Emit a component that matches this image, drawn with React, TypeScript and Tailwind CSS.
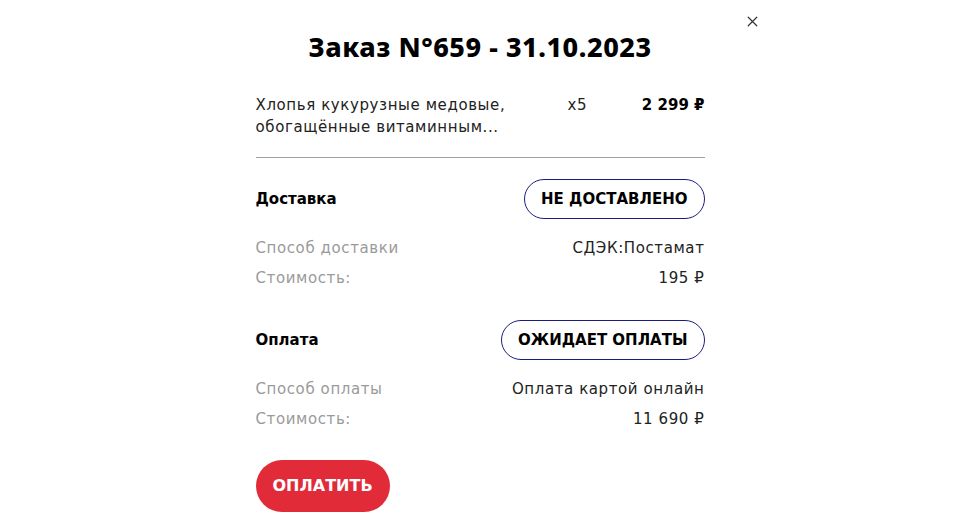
import { X } from "lucide-react";

const InfoRow = ({ label, value }: { label: string; value: string }) => (
  <div className="flex justify-between items-center h-[30px] text-[15px] tracking-[0.04em]">
    <span className="text-[#9a9a9a]">{label}</span>
    <span className="text-[#222]">{value}</span>
  </div>
);

const StatusBlock = ({
  title,
  status,
  rows,
}: {
  title: string;
  status: string;
  rows: { label: string; value: string }[];
}) => (
  <div>
    <div className="flex justify-between items-center">
      <span className="text-[15px] font-bold text-black">{title}</span>
      <div className="h-10 px-4 flex items-center rounded-full border border-[#1c1c80] text-[15px] font-bold uppercase text-black">
        {status}
      </div>
    </div>
    <div className="mt-[14px]">
      {rows.map((r) => (
        <InfoRow key={r.label} label={r.label} value={r.value} />
      ))}
    </div>
  </div>
);

const App = () => {
  return (
    <div
      className="relative w-full h-[524px] bg-white overflow-hidden"
      style={{ fontFamily: '"DejaVu Sans", sans-serif' }}
    >
      <button className="absolute top-[13px] right-[199px] text-[#333]">
        <X size={17} strokeWidth={1.7} />
      </button>

      <div className="mx-auto w-[449px] pt-[28px]">
        <h1
          className="text-center text-[27px] font-extrabold text-black leading-[38px] tracking-[0.02em]"
          style={{ fontFamily: '"Noto Sans", sans-serif' }}
        >
          Заказ N°659 - 31.10.2023
        </h1>

        {/* item */}
        <div className="mt-[28px] flex items-start text-[15px] leading-[22px] tracking-[0.04em]">
          <div className="w-[312px] text-[#222]">
            Хлопья кукурузные медовые,
            <br />
            обогащённые витаминным...
          </div>
          <div className="w-[50px] text-[#222]">x5</div>
          <div className="flex-1 text-right font-bold text-black tracking-normal">2 299 ₽</div>
        </div>

        <div className="mt-[19px] h-px bg-[#a0a0a0]" />

        <div className="mt-[21px]">
          <StatusBlock
            title="Доставка"
            status="Не доставлено"
            rows={[
              { label: "Способ доставки", value: "СДЭК:Постамат" },
              { label: "Стоимость:", value: "195 ₽" },
            ]}
          />
        </div>

        <div className="mt-[27px]">
          <StatusBlock
            title="Оплата"
            status="Ожидает оплаты"
            rows={[
              { label: "Способ оплаты", value: "Оплата картой онлайн" },
              { label: "Стоимость:", value: "11 690 ₽" },
            ]}
          />
        </div>

        <button className="mt-[26px] h-[52px] px-[17px] rounded-full bg-[#e12b38] text-white text-[16px] font-bold uppercase">
          Оплатить
        </button>
      </div>
    </div>
  );
};

export default App;
